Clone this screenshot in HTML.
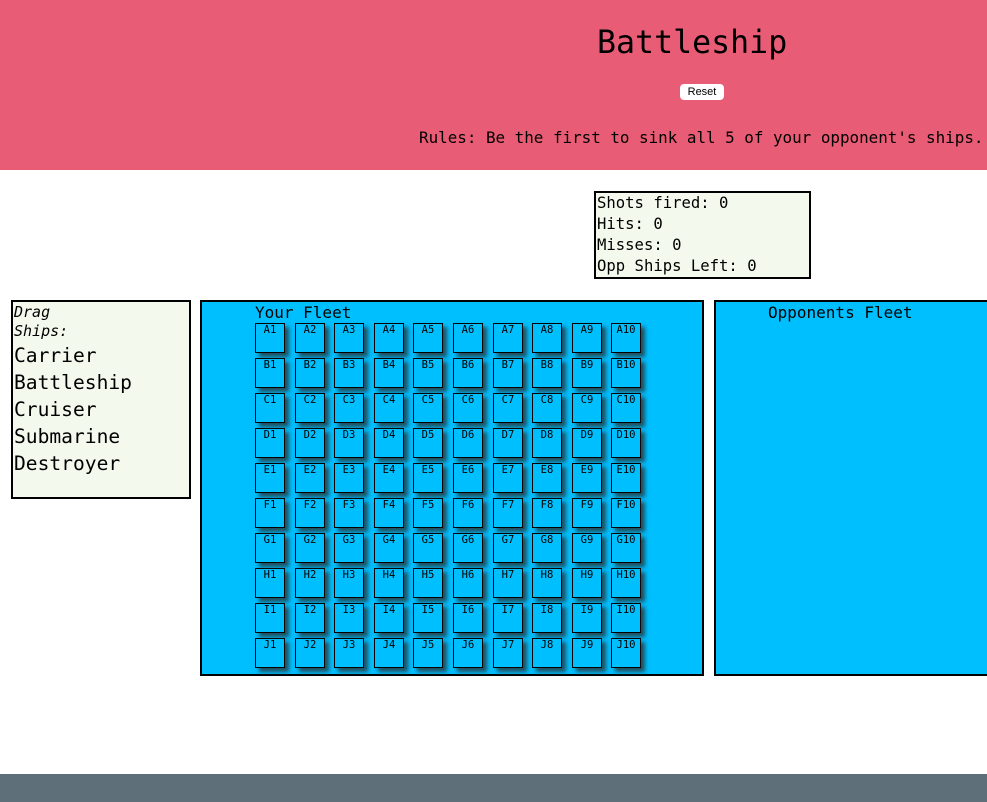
<!DOCTYPE html>
<html><head><style>
body{margin:0;width:987px;height:802px;overflow:hidden;position:relative;background:#fff;font-family:"DejaVu Sans Mono","Liberation Mono",monospace;color:#000}
.hdr{position:absolute;left:0;top:0;width:987px;height:170px;background:#e85d75}
.title{position:absolute;left:597px;top:23px;font-size:31.6px;line-height:40px;white-space:nowrap}
.btn{position:absolute;left:680px;top:84px;width:44px;height:16px;background:#fff;border-radius:4px;font-family:"Liberation Sans",sans-serif;font-size:11px;line-height:16px;text-align:center}
.rules{position:absolute;left:419px;top:127px;font-size:15.9px;line-height:22px;white-space:nowrap}
.stats{position:absolute;left:594px;top:191px;width:212px;height:84px;border:2px solid #000;background:#f4f9ee;font-size:15.6px;line-height:21px;padding-left:1px;white-space:nowrap}
.ships{position:absolute;left:11px;top:300px;width:175px;height:195px;border:2px solid #000;background:#f4f9ee;padding-left:1px}
.ships i{font-size:15px;line-height:19px;display:block;margin-top:1px}
.ships div{font-size:19.6px;line-height:27px}
.ships i+div{margin-top:1px}
.fleet{position:absolute;top:300px;height:372px;border:2px solid #000;background:#00bfff}
.cell{position:absolute;width:28px;height:28px;border:1px solid #000;box-shadow:4px 4px 4px #1f4f5f;font-size:10.5px;line-height:13px;text-align:center;background:#00bfff}
.ftr{position:absolute;left:0;top:774px;width:987px;height:28px;background:#5f6f7a}
</style></head><body>
<div class="hdr"><div class="title">Battleship</div><div class="btn">Reset</div><div class="rules">Rules: Be the first to sink all 5 of your opponent's ships.</div></div>
<div class="stats">Shots fired: 0<br>Hits: 0<br>Misses: 0<br>Opp Ships Left: 0</div>
<div class="ships"><i>Drag<br>Ships:</i><div>Carrier</div><div>Battleship</div><div>Cruiser</div><div>Submarine</div><div>Destroyer</div></div>
<div class="fleet" style="left:200px;width:500px"><div style="position:absolute;left:53px;top:1px;font-size:16px;line-height:20px">Your Fleet</div></div>
<div class="fleet" style="left:714px;width:280px"><div style="position:absolute;left:52px;top:1px;font-size:16px;line-height:20px">Opponents Fleet</div></div>
<div id="g"></div>
<script>
var r="ABCDEFGHIJ",h="";
for(var i=0;i<10;i++)for(var j=0;j<10;j++){h+='<div class="cell" style="left:'+Math.round(255+j*39.6)+'px;top:'+(323+i*35)+'px">'+r[i]+(j+1)+'</div>';}
document.getElementById("g").innerHTML=h;
</script>
<div class="ftr"></div>
</body></html>
